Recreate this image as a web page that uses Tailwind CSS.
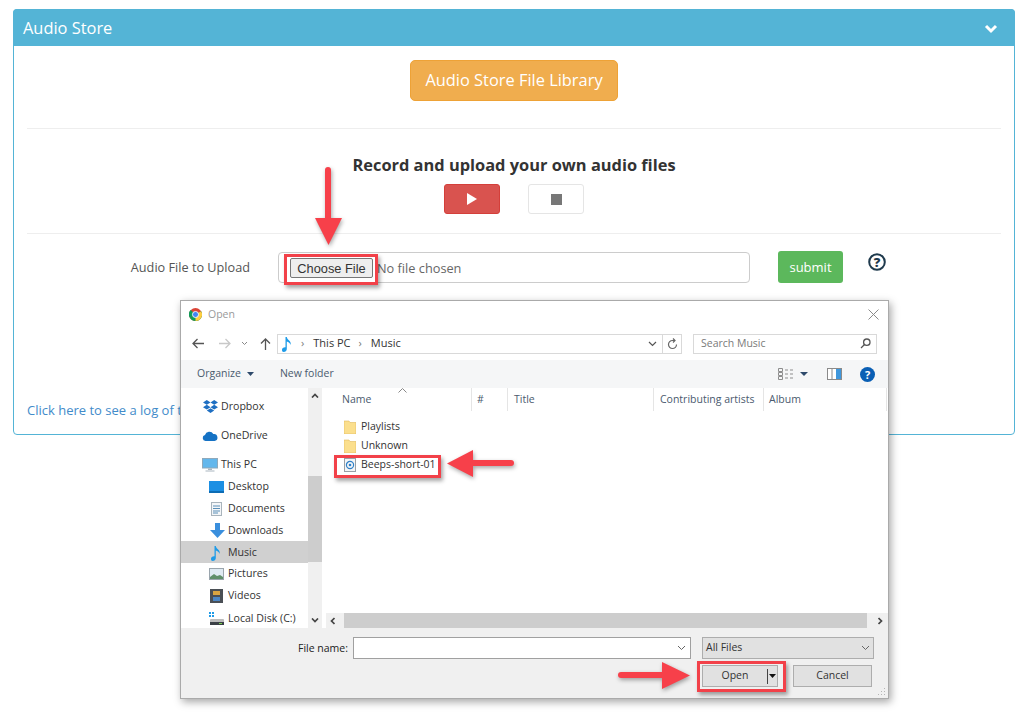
<!DOCTYPE html>
<html lang="en">
<head>
    <meta charset="UTF-8">
    <title>Audio Store</title>
    <script src="https://cdn.jsdelivr.net/npm/@tailwindcss/browser@4"></script>
</head>
<body class="bg-white relative w-[1024px] h-[712px] overflow-hidden font-['Open_Sans',sans-serif] text-[#555]">

    <!-- audio store panel -->
    <div class="pt-[9px] pl-[13px]">
        <div class="w-[1002px] h-[426px] border border-[#54b4d6] rounded-[4px] flex flex-col">
            <div class="h-[37px] -mx-px -mt-px pt-[2px] bg-[#54b4d6] rounded-t-[4px] flex items-center justify-between pl-[10px] pr-[17px] text-white text-[16.4px]">
                <span>Audio Store</span>
                <svg width="14" height="10" viewBox="0 0 14 10" fill="none" stroke="white" stroke-width="3"><path d="M2 2l5 5 5-5"/></svg>
            </div>
            <div class="flex justify-center pt-[14px]">
                <button class="w-[208px] h-[41px] bg-[#f0ad4e] border border-[#eea236] rounded-[5px] text-white text-[16.4px]">Audio Store File Library</button>
            </div>
            <div class="mx-[13px] mt-[27px] h-px bg-[#eeeeee]"></div>
            <h3 class="mt-[25px] text-center text-[16.4px] leading-[22px] font-bold text-[#333]">Record and upload your own audio files</h3>
            <div class="flex justify-center gap-[28px] mt-[8px]">
                <button class="w-[56px] h-[30px] bg-[#d9534f] rounded-[3px] border border-[#d43f3a] flex items-center justify-center">
                    <svg width="10" height="12" viewBox="0 0 10 12"><path d="M0 0l10 6-10 6z" fill="white"/></svg>
                </button>
                <button class="w-[56px] h-[30px] bg-white rounded-[3px] border border-[#e5e5e5] flex items-center justify-center">
                    <span class="w-[11px] h-[11px] bg-[#777]"></span>
                </button>
            </div>
            <div class="mx-[13px] mt-[19px] h-px bg-[#eeeeee]"></div>
            <div class="flex mt-[18px]">
                <label class="w-[236px] text-right text-[12.7px] leading-[30px]">Audio File to Upload</label>
                <div class="ml-[28px] w-[472px] h-[31px] border border-[#ccc] rounded-[4px] flex items-center pl-[11px]">
                    <span class="w-[83px] h-[20px] bg-[#eeeeee] border border-[#777] rounded-[2px] text-[#333] text-center leading-[19px] font-['Liberation_Sans',sans-serif] text-[12.8px]">Choose File</span>
                    <span class="ml-[4px] mt-[2px] text-[#666] text-[12.75px]">No file chosen</span>
                </div>
                <button class="ml-[28px] w-[65px] h-[32px] -mt-px pt-[1px] bg-[#5cb85c] rounded-[3px] text-white text-[13px]">submit</button>
                <svg class="ml-[25px] mt-px" width="18" height="18" viewBox="0 0 18 18"><circle cx="9" cy="9" r="7.8" fill="none" stroke="#1f3a4d" stroke-width="2"/><text x="9" y="13.5" text-anchor="middle" font-size="13" font-weight="800" fill="#1f3a4d" font-family="Open Sans">?</text></svg>
            </div>
            <a class="ml-[13px] mt-[117px] text-[13px] leading-[20px] text-[#428bca]">Click here to see a log of t</a>
        </div>
    </div>

    <!-- windows open file dialog -->
    <div class="absolute left-[180px] top-[300px] w-[709px] h-[399px] bg-white border border-[#aaa] shadow-[2px_3px_8px_rgba(0,0,0,0.35)] flex flex-col font-['Open_Sans',sans-serif] text-[10.5px] text-[#333]">
        <div class="h-[25px] flex items-center pt-[2px] pl-[8px] pr-[9px] shrink-0">
            <svg width="13" height="13" viewBox="0 0 24 24"><circle cx="12" cy="12" r="12" fill="#db4437"/><path d="M12 12L1.6 18A12 12 0 0 1 3 3.5z" fill="#0f9d58"/><path d="M12 12l10.4-6A12 12 0 0 1 12 24 12 12 0 0 1 1.6 18z" fill="#0f9d58"/><path d="M22.4 6A12 12 0 0 1 12 24L12 12z" fill="#ffcd40"/><circle cx="12" cy="12" r="5.6" fill="#4285f4" stroke="white" stroke-width="1.6"/></svg>
            <span class="ml-[6px] text-[#9a9a9a]">Open</span>
            <svg class="ml-auto" width="11" height="11" viewBox="0 0 11 11" stroke="#8a8a8a" fill="none"><path d="M.5.5l10 10M10.5.5l-10 10"/></svg>
        </div>
        <div class="h-[34px] flex items-center shrink-0 pt-[1px]">
            <svg class="ml-[11px]" width="12" height="11" viewBox="0 0 12 11" fill="none" stroke="#555" stroke-width="1.3"><path d="M12 5.5H1M5.5 1L1 5.5 5.5 10"/></svg>
            <svg class="ml-[15px]" width="12" height="11" viewBox="0 0 12 11" fill="none" stroke="#c8c8c8" stroke-width="1.3"><path d="M0 5.5h11M6.500 1L11 5.500 6.500 10"/></svg>
            <svg class="ml-[10px]" width="7" height="5" viewBox="0 0 7 5" fill="none" stroke="#888"><path d="M1 1l2.500 2.500L6 1"/></svg>
            <svg class="ml-[12px]" width="11" height="12" viewBox="0 0 11 12" fill="none" stroke="#555" stroke-width="1.3"><path d="M5.500 12V1M1 5.500L5.500 1 10 5.500"/></svg>
            <div class="ml-[6px] w-[405px] h-[20px] border border-[#d9d9d9] flex items-center">
                <svg class="ml-[4px]" width="11" height="16" viewBox="0 0 11 16"><path d="M3.500 1h1.300c.3 3 4.700 3.500 3.900 8-.5-2-2.300-3-3.900-3.500V13c0 1.800-1.600 3-3 3S0 15 0 13.700 1.500 11 3.500 11.200z" fill="#1e9be8"/></svg>
                <span class="ml-[8px] text-[#777] text-[11px]">›</span>
                <span class="ml-[9px] text-[11px]">This PC</span>
                <span class="ml-[8px] text-[#777] text-[11px]">›</span>
                <span class="ml-[9px] text-[11px]">Music</span>
                <svg class="ml-auto mr-[5px]" width="9" height="6" viewBox="0 0 9 6" fill="none" stroke="#555" stroke-width="1.200"><path d="M1 1l3.500 3.500L8 1"/></svg>
                <div class="w-[19px] h-full border-l border-[#d9d9d9] flex items-center justify-center">
                    <svg width="11" height="12" viewBox="0 0 11 12" fill="none" stroke="#666" stroke-width="1.200"><path d="M9.500 6.500a4 4 0 1 1-4-4h2M6 .5l2 2-2 2"/></svg>
                </div>
            </div>
            <div class="ml-[11px] w-[184px] h-[20px] border border-[#d9d9d9] flex items-center pl-[7px] pr-[5px] text-[#7a7a7a]">
                <span>Search Music</span>
                <svg class="ml-auto" width="11" height="11" viewBox="0 0 11 11" fill="none" stroke="#555" stroke-width="1.300"><circle cx="6.800" cy="4.200" r="3.200"/><path d="M4.500 6.500L1 10"/></svg>
            </div>
        </div>
        <div class="h-[28px] bg-[#f5f6f7] flex items-center shrink-0 text-[#4a5a6e]">
            <span class="ml-[16px]">Organize</span>
            <svg class="ml-[6px]" width="7" height="4" viewBox="0 0 7 4"><path d="M0 0h7L3.500 4z" fill="#2e4a6b"/></svg>
            <span class="ml-[26px]">New folder</span>
            <svg class="ml-auto" width="16" height="12" viewBox="0 0 16 12" fill="none" stroke="#8d8d8d"><path d="M.5.500h4v3h-4zM.5 4.500h4v3h-4zM.5 8.500h4v3h-4zM7 2h3M12 2h3M7 6h3M12 6h3M7 10h3M12 10h3"/></svg>
            <svg class="ml-[6px]" width="8" height="4" viewBox="0 0 8 4"><path d="M0 0h8L4 4z" fill="#2e4a6b"/></svg>
            <svg class="ml-[19px]" width="15" height="12" viewBox="0 0 15 12"><rect x=".5" y=".5" width="14" height="11" fill="#fff" stroke="#8a8a8a"/><rect x="9" y="1" width="5" height="10" fill="#3f97dc"/><path d="M5 1v10" stroke="#8a8a8a"/></svg>
            <svg class="ml-[18px] mr-[13px]" width="15" height="15" viewBox="0 0 15 15"><circle cx="7.500" cy="7.500" r="7.500" fill="#0a5fb4"/><text x="7.500" y="11.500" text-anchor="middle" font-size="11" font-weight="700" fill="white" font-family="Open Sans">?</text></svg>
        </div>
        <div class="flex flex-1 min-h-0">
            <!-- nav tree -->
            <div class="w-[127px] shrink-0 pt-[8px] flex flex-col text-[10.6px]">
                <div class="h-[22px] flex items-center pl-[22px] gap-[3px]">
                    <svg width="15" height="13" viewBox="0 0 15 13"><path d="M3.800 0L7.500 2.400 3.800 4.800 0 2.400zM11.200 0L15 2.400l-3.800 2.400-3.700-2.400zM3.800 9.600L0 7.200l3.800-2.400 3.700 2.400zM11.200 9.600L7.500 7.200l3.700-2.400L15 7.200zM7.500 13l-3.700-2.400 3.700-2.400 3.700 2.400z" fill="#1f6fc2"/></svg>
                    <span>Dropbox</span>
                </div>
                <div class="h-[22px] mt-[7px] flex items-center pl-[21px] gap-[3px]">
                    <svg width="16" height="10" viewBox="0 0 15 10"><path d="M3 10a3 3 0 0 1-.5-5.900A4.500 4.500 0 0 1 10.800 3 3.500 3.500 0 0 1 12 10z" fill="#1572c4"/></svg>
                    <span>OneDrive</span>
                </div>
                <div class="h-[22px] mt-[7px] pt-px flex items-center pl-[21px] gap-[3px]">
                    <svg width="16" height="14" viewBox="0 0 16 14"><rect x=".5" y=".5" width="15" height="9.500" fill="#63b7ec" stroke="#8fa9bb"/><path d="M6 10.500h4v1.500H6zM3.500 12.500h9v1h-9z" fill="#a9b6bf"/></svg>
                    <span>This PC</span>
                </div>
                <div class="h-[22px] mt-px flex items-center pl-[28px] gap-[4px]">
                    <svg width="15" height="12" viewBox="0 0 15 12"><rect width="15" height="12" fill="#1c8fe3"/><rect y="10" width="15" height="2" fill="#0d6cb4"/></svg>
                    <span>Desktop</span>
                </div>
                <div class="h-[22px] flex items-center pl-[30px] gap-[6px]">
                    <svg width="11" height="14" viewBox="0 0 11 14" fill="none"><rect x=".5" y=".5" width="10" height="13" fill="#f4f6f8" stroke="#a9b4bc"/><path d="M2 4h7M2 6.500h7M2 9h7M2 11h5" stroke="#5a8fb8"/></svg>
                    <span>Documents</span>
                </div>
                <div class="h-[22px] pt-px flex items-center pl-[29px] gap-[3px]">
                    <svg width="15" height="15" viewBox="0 0 15 15"><path d="M5 0h5v7h5l-7.500 8L0 7h5z" fill="#3a8fdd"/></svg>
                    <span>Downloads</span>
                </div>
                <div class="h-[22px] pt-px bg-[#d0d0d0] flex items-center pl-[30px] gap-[6px]">
                    <svg width="11" height="16" viewBox="0 0 11 16"><path d="M3.500 1h1.300c.3 3 4.700 3.500 3.900 8-.5-2-2.300-3-3.900-3.500V13c0 1.800-1.600 3-3 3S0 15 0 13.700 1.500 11 3.500 11.200z" fill="#1e9be8"/></svg>
                    <span>Music</span>
                </div>
                <div class="h-[22px] pt-px flex items-center pl-[28px] gap-[4px]">
                    <svg width="15" height="12" viewBox="0 0 15 12"><rect x=".5" y=".5" width="14" height="11" fill="#dfeaf2" stroke="#9aa5ad"/><path d="M1 9l4-3 3 2 3-1 3 2v2H1z" fill="#5f8f6a"/></svg>
                    <span>Pictures</span>
                </div>
                <div class="h-[22px] pt-px flex items-center pl-[29px] gap-[5px]">
                    <svg width="13" height="14" viewBox="0 0 13 14"><rect width="13" height="14" fill="#4a4f55"/><rect x="3" y="2" width="7" height="4" fill="#d9a441"/><rect x="3" y="8" width="7" height="4" fill="#4b86c4"/></svg>
                    <span>Videos</span>
                </div>
                <div class="h-[22px] pt-[3px] flex items-center pl-[28px] gap-[4px]">
                    <svg width="15" height="13" viewBox="0 0 15 13"><path d="M0 0h2v2H0zM3 0h2v2H3zM0 3h2v2H0zM3 3h2v2H3z" fill="#1e9be8"/><rect x="1" y="7" width="14" height="6" rx="1" fill="#bcbcbc"/><rect x="1" y="10" width="14" height="3" fill="#3b4046"/><rect x="10" y="11" width="3" height="1" fill="#7ad04f"/></svg>
                    <span>Local Disk (C:)</span>
                </div>
            </div>
            <!-- nav scrollbar -->
            <div class="w-[14px] shrink-0 bg-[#f0f0f0] flex flex-col items-center">
                <svg class="mt-[5px]" width="8" height="5" viewBox="0 0 8 5" fill="none" stroke="#444" stroke-width="1.700"><path d="M1 4.500l3-3 3 3"/></svg>
                <div class="mt-[78px] w-full h-[86px] bg-[#cdcdcd]"></div>
                <svg class="mt-auto mb-[5px]" width="8" height="5" viewBox="0 0 8 5" fill="none" stroke="#444" stroke-width="1.700"><path d="M1 .5l3 3 3-3"/></svg>
            </div>
            <div class="w-[4px] shrink-0"></div>
            <!-- file list -->
            <div class="flex-1 min-w-0 flex flex-col">
                <div class="h-[23px] flex items-stretch text-[#4a5a6e] relative shrink-0">
                    <svg class="absolute left-[72px] top-0" width="9" height="5" viewBox="0 0 9 5" fill="none" stroke="#888"><path d="M.5 4.500l4-4 4 4"/></svg>
                    <div class="w-[146px] pl-[16px] border-r border-[#e5e5e5] flex items-center">Name</div>
                    <div class="w-[36px] pl-[5px] border-r border-[#e5e5e5] flex items-center">#</div>
                    <div class="w-[146px] pl-[6px] border-r border-[#e5e5e5] flex items-center">Title</div>
                    <div class="w-[110px] pl-[6px] border-r border-[#e5e5e5] flex items-center">Contributing artists</div>
                    <div class="w-[123px] pl-[5px] border-r border-[#e5e5e5] flex items-center">Album</div>
                </div>
                <div class="flex-1 pt-[6px] pl-[18px]">
                    <div class="h-[19px] flex items-center gap-[5px]">
                        <svg width="12" height="14" viewBox="0 0 12 14"><path d="M0 1h5l1 1.500h6V14H0z" fill="#fbdf8d" stroke="#e0b95c" stroke-width=".6"/></svg>
                        <span>Playlists</span>
                    </div>
                    <div class="h-[19px] flex items-center gap-[5px]">
                        <svg width="12" height="14" viewBox="0 0 12 14"><path d="M0 1h5l1 1.500h6V14H0z" fill="#fbdf8d" stroke="#e0b95c" stroke-width=".6"/></svg>
                        <span>Unknown</span>
                    </div>
                    <div class="h-[19px] flex items-center gap-[5px]">
                        <svg width="12" height="14" viewBox="0 0 12 14"><rect x=".5" y=".5" width="11" height="13" fill="#f4f5f6" stroke="#9aa0a6"/><circle cx="6" cy="7" r="3.600" fill="none" stroke="#2f80c8" stroke-width="1.200"/><circle cx="6" cy="7" r="1.300" fill="#2f80c8"/></svg>
                        <span>Beeps-short-01</span>
                    </div>
                </div>
                <div class="h-[15px] bg-[#f0f0f0] flex items-center shrink-0">
                    <svg class="ml-[4px]" width="5" height="8" viewBox="0 0 5 8" fill="none" stroke="#444" stroke-width="1.700"><path d="M4.500 1l-3 3 3 3"/></svg>
                    <div class="ml-[9px] w-[523px] h-full bg-[#cdcdcd]"></div>
                    <svg class="ml-auto mr-[5px]" width="5" height="8" viewBox="0 0 5 8" fill="none" stroke="#444" stroke-width="1.700"><path d="M.5 1l3 3-3 3"/></svg>
                </div>
            </div>
        </div>
        <!-- footer -->
        <div class="h-[70px] bg-[#f0f0f0] shrink-0 relative pt-[9px]">
            <div class="flex items-start">
                <label class="w-[167px] text-right leading-[22px] text-[#222]">File name:</label>
                <div class="ml-[5px] w-[338px] h-[22px] bg-white border border-[#a0a0a0] flex items-center justify-end pr-[4px]">
                    <svg width="9" height="6" viewBox="0 0 9 6" fill="none" stroke="#666"><path d="M1 1l3.500 3.500L8 1"/></svg>
                </div>
                <div class="ml-[11px] w-[172px] h-[22px] bg-[#e1e1e1] border border-[#adadad] flex items-center px-[3px]">
                    <span>All Files</span>
                    <svg class="ml-auto" width="9" height="6" viewBox="0 0 9 6" fill="none" stroke="#666"><path d="M1 1l3.500 3.500L8 1"/></svg>
                </div>
            </div>
            <div class="flex mt-[6px] ml-[521px]">
                <div class="w-[76px] h-[22px] bg-[#e1e1e1] border border-[#adadad] flex items-center">
                    <span class="flex-1 text-center">Open</span>
                    <span class="w-px h-[15px] bg-[#444]"></span>
                    <svg class="mx-[1px]" width="7" height="4" viewBox="0 0 7 4"><path d="M0 0h7L3.500 4z" fill="#111"/></svg>
                </div>
                <div class="ml-[15px] w-[79px] h-[22px] bg-[#e1e1e1] border border-[#adadad] flex items-center justify-center">Cancel</div>
            </div>
            <svg class="absolute right-[2px] bottom-[2px]" width="9" height="9" viewBox="0 0 9 9" fill="#b5b5b5"><path d="M7 1h1v1H7zM4 4h1v1H4zM7 4h1v1H7zM1 7h1v1H1zM4 7h1v1H4zM7 7h1v1H7z"/></svg>
        </div>
    </div>

    <!-- screenshot annotations -->
    <div class="absolute left-[284px] top-[254px] w-[94px] h-[31px] border-[3px] border-[#f24149] shadow-[2px_3px_4px_rgba(0,0,0,0.35)]"></div>
    <div class="absolute left-[334px] top-[455px] w-[107px] h-[23px] border-[3px] border-[#f24149] shadow-[2px_3px_4px_rgba(0,0,0,0.35)]"></div>
    <div class="absolute left-[697px] top-[661px] w-[89px] h-[31px] border-[3px] border-[#f24149] shadow-[2px_3px_4px_rgba(0,0,0,0.35)]"></div>

    <svg class="absolute left-[310px] top-[165px] drop-shadow-[1px_2px_2px_rgba(0,0,0,0.35)]" width="36" height="84" viewBox="0 0 36 84">
        <path d="M18 5v50" stroke="#f7404a" stroke-width="6" stroke-linecap="round"/><path d="M5 53h27L18.500 80z" fill="#f7404a"/>
    </svg>
    <svg class="absolute left-[444px] top-[446px] drop-shadow-[1px_2px_2px_rgba(0,0,0,0.35)]" width="74" height="36" viewBox="0 0 74 36">
        <path d="M26 17h41" stroke="#f7404a" stroke-width="6" stroke-linecap="round"/><path d="M29 4v27L3 17.500z" fill="#f7404a"/>
    </svg>
    <svg class="absolute left-[614px] top-[658px] drop-shadow-[1px_2px_2px_rgba(0,0,0,0.35)]" width="80" height="36" viewBox="0 0 80 36">
        <path d="M7 17h45" stroke="#f7404a" stroke-width="6" stroke-linecap="round"/><path d="M48 4v27l28-13.500z" fill="#f7404a"/>
    </svg>
</body>
</html>
